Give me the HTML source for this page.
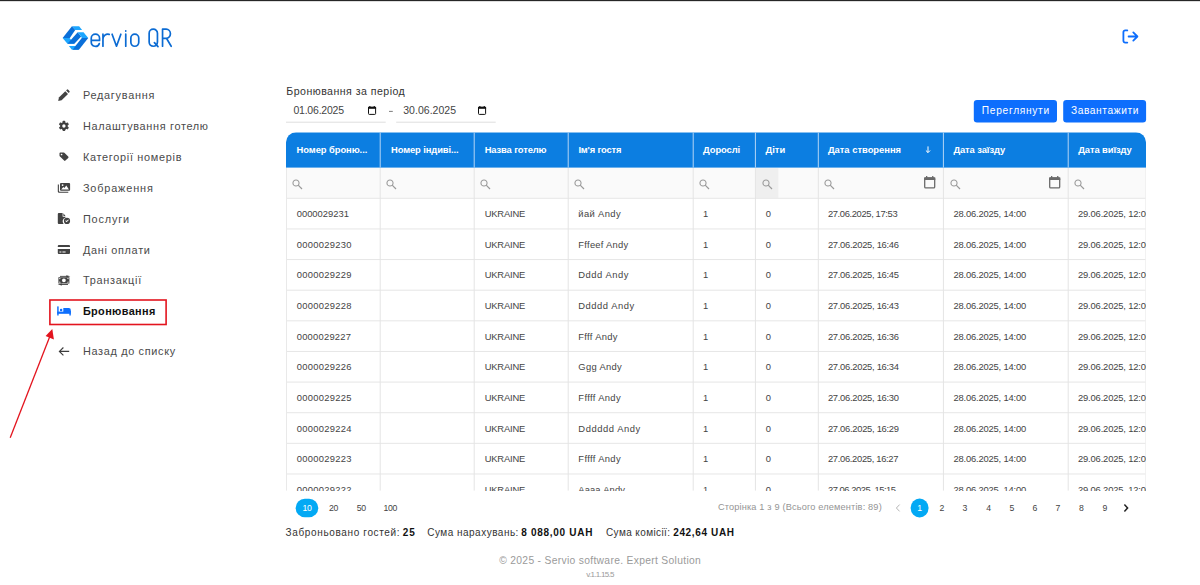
<!DOCTYPE html>
<html lang="uk"><head><meta charset="utf-8"><title>Servio QR</title>
<style>
*{box-sizing:border-box;margin:0;padding:0}
html,body{width:1200px;height:585px;overflow:hidden;background:#fff}
body{font-family:"Liberation Sans",sans-serif;color:#333;position:relative}
.a{position:absolute;white-space:nowrap}
.t{position:absolute;white-space:nowrap;line-height:20px;margin-top:-10px}
#topbar{left:0;top:0;width:1200px;height:1.2px;background:#2a2a2a}
.nav{font-size:10.9px;color:#4a4a4a}
#grid{left:286px;top:132.3px;width:860px;height:358.5px;overflow:hidden;border-radius:10px 10px 0 0}
#ghead{left:0;top:0;width:920px;height:35.3px;background:#0c7ee1}
.hd{font-size:9.4px;font-weight:bold;color:#fff}
.vl{position:absolute;top:0;width:1px;height:360px;background:#e3e3e3}
.vh{position:absolute;top:0;width:1px;height:35.3px;background:#7fb9ee}
.hl{position:absolute;left:0;width:920px;height:1px;background:#e6e6e6}
#gfilt{left:0;top:35.3px;width:920px;height:30.8px;background:#fafafa}
.c{font-size:9.4px;color:#444}
.btn{position:absolute;height:22.5px;border-radius:3.2px;background:#0d6efd}
.bt{font-size:10.2px;color:#fff}
.pg{font-size:8.7px;color:#444}
.sm{font-size:10px;color:#333}
.sb{font-size:10px;color:#111;font-weight:bold}
.ft{color:#9a9a9a}
</style></head><body>

<svg class="a" style="left:0;top:0" width="1200" height="585" viewBox="0 0 1200 585">
<defs><clipPath id="gc"><path d="M286.0 490.8V142.35A10 10 0 0 1 296.0 132.35H1136.0A10 10 0 0 1 1146.0 142.35V490.8Z"/></clipPath></defs>
<g clip-path="url(#gc)">
<rect x="286.0" y="167.6" width="860.0" height="30.700000000000017" fill="#fafafa"/>
<rect x="755.9" y="168.2" width="22.4" height="29.700000000000017" fill="#efefef"/>
<rect x="286.0" y="197.80" width="860.0" height="1" fill="#e6e6e6"/>
<rect x="286.0" y="228.43" width="860.0" height="1" fill="#e6e6e6"/>
<rect x="286.0" y="259.06" width="860.0" height="1" fill="#e6e6e6"/>
<rect x="286.0" y="289.69" width="860.0" height="1" fill="#e6e6e6"/>
<rect x="286.0" y="320.32" width="860.0" height="1" fill="#e6e6e6"/>
<rect x="286.0" y="350.95" width="860.0" height="1" fill="#e6e6e6"/>
<rect x="286.0" y="381.58" width="860.0" height="1" fill="#e6e6e6"/>
<rect x="286.0" y="412.21" width="860.0" height="1" fill="#e6e6e6"/>
<rect x="286.0" y="442.84" width="860.0" height="1" fill="#e6e6e6"/>
<rect x="286.0" y="473.47" width="860.0" height="1" fill="#e6e6e6"/>
<rect x="286.0" y="504.10" width="860.0" height="1" fill="#e6e6e6"/>
<rect x="286.0" y="167.6" width="1" height="323.20000000000005" fill="#e9e9e9"/>
<rect x="1145.2" y="167.6" width=".8" height="323.20000000000005" fill="#efefef"/>
<rect x="379.70" y="167.6" width="1" height="323.20000000000005" fill="#e4e4e4"/>
<rect x="473.70" y="167.6" width="1" height="323.20000000000005" fill="#e4e4e4"/>
<rect x="567.70" y="167.6" width="1" height="323.20000000000005" fill="#e4e4e4"/>
<rect x="692.70" y="167.6" width="1" height="323.20000000000005" fill="#e4e4e4"/>
<rect x="754.90" y="167.6" width="1" height="323.20000000000005" fill="#e4e4e4"/>
<rect x="817.80" y="167.6" width="1" height="323.20000000000005" fill="#e4e4e4"/>
<rect x="942.90" y="167.6" width="1" height="323.20000000000005" fill="#e4e4e4"/>
<rect x="1067.70" y="167.6" width="1" height="323.20000000000005" fill="#e4e4e4"/>
<rect x="286.0" y="132.35" width="860.0" height="35.25" fill="#0c7ee1"/>
<rect x="379.70" y="132.35" width="1" height="35.25" fill="#b4d5f5"/>
<rect x="473.70" y="132.35" width="1" height="35.25" fill="#b4d5f5"/>
<rect x="567.70" y="132.35" width="1" height="35.25" fill="#b4d5f5"/>
<rect x="692.70" y="132.35" width="1" height="35.25" fill="#b4d5f5"/>
<rect x="754.90" y="132.35" width="1" height="35.25" fill="#b4d5f5"/>
<rect x="817.80" y="132.35" width="1" height="35.25" fill="#b4d5f5"/>
<rect x="942.90" y="132.35" width="1" height="35.25" fill="#b4d5f5"/>
<rect x="1067.70" y="132.35" width="1" height="35.25" fill="#b4d5f5"/>
</g>
<rect x="973.8" y="99.9" width="83.2" height="22.5" rx="3.2" fill="#0d6efd"/>
<rect x="1063.2" y="99.9" width="82.9" height="22.5" rx="3.2" fill="#0d6efd"/>
<rect x="286" y="121.7" width="99.7" height="1" fill="#dedede"/>
<rect x="396.2" y="121.7" width="99.5" height="1" fill="#dedede"/>
<rect x="389" y="110.9" width="3.8" height=".85" fill="#666"/>
<rect x="295.6" y="498.8" width="22.7" height="18.4" rx="9.2" fill="#03a9f4"/>
<rect x="910.7" y="498.6" width="17.8" height="18.8" rx="8.9" fill="#03a9f4"/>
<rect x="49.9" y="300" width="116.2" height="24.5" fill="none" stroke="#e3141e" stroke-width="1.6"/>
<path d="M10.2 437.8 L49.6 337" stroke="#e3141e" stroke-width="1.3" fill="none"/><path d="M52.3 329 L53.9 339.4 L45.6 335.9 Z" fill="#e3141e"/>
<rect x="0" y="0" width="1200" height="1.15" fill="#262626"/>
</svg>
<svg class="a" style="left:60px;top:24px" width="30" height="28" viewBox="0 0 627 585">
<polygon points="250,45 400,45 462,125 318,125" fill="#1ca6ff"/>
<polygon points="250,45 318,125 205,290 55,295" fill="#0a6fd9"/>
<polygon points="55,295 200,293 300,415 155,415" fill="#1ca6ff"/>
<polygon points="370,170 442,262 300,415 155,415" fill="#0a6fd9"/>
<polygon points="370,170 492,170 590,290 455,290 442,262" fill="#1ca6ff"/>
<polygon points="185,460 322,460 395,540 250,540" fill="#1ca6ff"/>
<polygon points="455,290 590,290 395,540 268,540 322,460" fill="#0a6fd9"/>
</svg>
<svg class="a" style="left:88px;top:26px" width="90" height="24" viewBox="88 26 90 24" fill="none" stroke="#0b6bd3" stroke-width="1.7" stroke-linecap="round" stroke-linejoin="round">
<path d="M91.25 40.4H99.55V38.3A4.15 4.15 0 0 0 91.25 38.3V42.1A4.15 4.15 0 0 0 99.3 43.6"/>
<path d="M102.95 34.2V46.25M102.95 39A4.8 4.8 0 0 1 109.2 34.4"/>
<path d="M112.1 34.2L116.5 46.2L120.85 34.2"/>
<path d="M125.75 34.2V46.25M125.75 30.9V31.1"/>
<path d="M130.85 38.1A3.95 3.95 0 0 1 138.75 38.1V42.3A3.95 3.95 0 0 1 130.85 42.3Z"/>
<path d="M149.15 33.3A4.15 4.15 0 0 1 157.45 33.3V42.1A4.15 4.15 0 0 1 149.15 42.1Z"/>
<path d="M154.4 42.6L158 46.6"/>
<path d="M162.55 46.25V29.15H166.2A4.2 4.6 0 0 1 166.2 38.4H162.55M166.6 38.5L171.2 46.25"/>
</svg>
<svg class="a" style="left:1121px;top:28px" width="19" height="17" viewBox="1121 28 19 17" fill="none" stroke="#0d6efd" stroke-width="1.8" stroke-linecap="round" stroke-linejoin="round">
<path d="M1127.3 30.4H1125.2A1.8 1.8 0 0 0 1123.4 32.2V40.8A1.8 1.8 0 0 0 1125.2 42.6H1127.3"/>
<path d="M1128.6 36.5H1137M1133.3 32.4L1137.4 36.5L1133.3 40.6"/>
</svg>
<div class="t nav" id="nav0" style="left:82.9px;top:95.2px;letter-spacing:0.742px">Редагування</div>
<div class="t nav" id="nav1" style="left:82.9px;top:126.0px;letter-spacing:0.676px">Налаштування готелю</div>
<div class="t nav" id="nav2" style="left:82.9px;top:157.0px;letter-spacing:0.707px">Категорії номерів</div>
<div class="t nav" id="nav3" style="left:82.9px;top:188.0px;letter-spacing:0.848px">Зображення</div>
<div class="t nav" id="nav4" style="left:82.9px;top:218.8px;letter-spacing:0.852px">Послуги</div>
<div class="t nav" id="nav5" style="left:82.9px;top:249.6px;letter-spacing:0.691px">Дані оплати</div>
<div class="t nav" id="nav6" style="left:82.9px;top:280.3px;letter-spacing:0.736px">Транзакції</div>
<div class="t nav" id="nav7" style="left:82.9px;top:311.2px;letter-spacing:0.373px;font-weight:bold;color:#111">Бронювання</div>
<div class="t nav" id="nav8" style="left:82.9px;top:351.3px;letter-spacing:0.673px">Назад до списку</div>
<svg class="a" style="left:56px;top:88px" width="16" height="270" viewBox="56 88 16 270">
<g fill="#424242">
<!-- pencil -->
<path d="M58.2 100.9L58.9 97.6L65.3 91.2L68 93.9L61.6 100.3Z"/>
<path d="M66.1 90.4L66.8 89.7A1 1 0 0 1 68.2 89.7L69.4 90.9A1 1 0 0 1 69.4 92.3L68.7 93Z"/>
<!-- gear -->
<g transform="translate(63.9 125.95)">
<circle r="2.75" fill="none" stroke="#3d3d3d" stroke-width="2.1"/>
<g id="tth"><rect x="-1.35" y="-5.1" width="2.7" height="2.4" rx=".7"/><rect x="-1.35" y="2.7" width="2.7" height="2.4" rx=".7"/></g>
<use href="#tth" transform="rotate(60)"/><use href="#tth" transform="rotate(120)"/>
</g>
<!-- tag -->
<path transform="translate(63.85 156.5) scale(.84) translate(-63.4 -156.65)" fill-rule="evenodd" d="M58.2 152.9A1.1 1.1 0 0 1 59.3 151.8H63.2A1.2 1.2 0 0 1 64 152.1L68.6 156.7A1.1 1.1 0 0 1 68.6 158.3L65.3 161.5A1.1 1.1 0 0 1 63.7 161.5L58.5 156.4A1.2 1.2 0 0 1 58.2 155.6ZM60.7 153.3A1 1 0 1 0 60.7 155.3A1 1 0 1 0 60.7 153.3Z"/>
<!-- images -->
<path d="M57.8 184.6H58.9V190.9A.8.8 0 0 0 59.7 191.7H68.3V192.8H59.2A1.4 1.4 0 0 1 57.8 191.4Z"/>
<path fill-rule="evenodd" d="M60 183.9A1 1 0 0 1 61 182.9H69.1A1 1 0 0 1 70.1 183.9V189.7A1 1 0 0 1 69.1 190.7H61A1 1 0 0 1 60 189.7ZM61.2 189.5H68.9L66.3 185.6L64.4 188L63.3 186.9ZM62.6 184.2A.9.9 0 1 0 62.6 186A.9.9 0 1 0 62.6 184.2Z"/>
<!-- file check -->
<path d="M58.8 213.1H62.6V216.2A.6.6 0 0 0 63.2 216.8H65.6V217.5A3.9 3.9 0 0 0 63.6 223.9H58.8A1 1 0 0 1 57.8 222.9V214.1A1 1 0 0 1 58.8 213.1ZM63.4 213.2L65.5 215.9H63.4Z"/>
<path fill-rule="evenodd" d="M67 217.8A3.1 3.1 0 1 0 67 224A3.1 3.1 0 1 0 67 217.8ZM65.3 220.9L65.9 220.3L66.6 221L68.2 219.4L68.8 220L66.6 222.2Z"/>
<!-- credit card -->
<path d="M57.8 246.1A1 1 0 0 1 58.8 245.1H69A1 1 0 0 1 70 246.1V246.9H57.8Z"/>
<path fill-rule="evenodd" d="M57.8 248.9H70V253A1 1 0 0 1 69 254H58.8A1 1 0 0 1 57.8 253ZM59.4 251.4V252.4H61.4V251.4ZM62.4 251.4V252.4H65.6V251.4Z"/>
<!-- money transfer -->
<path fill-rule="evenodd" d="M58.4 277.2H69.4V283.6H58.4ZM63.9 278.4A1.9 1.9 0 1 0 63.9 282.2A1.9 1.9 0 1 0 63.9 278.4ZM59.3 278.1V279.3A1.2 1.2 0 0 0 60.5 278.1ZM68.5 278.1H67.3A1.2 1.2 0 0 0 68.5 279.3ZM59.3 282.7H60.5A1.2 1.2 0 0 0 59.3 281.5ZM68.5 282.7V281.5A1.2 1.2 0 0 0 67.3 282.7Z"/>
<path d="M66.3 275.3L70.3 276.3L66.3 277.4ZM62 285.5L57.6 284.5L62 283.4Z"/>
<rect x="60" y="275.9" width="7" height=".9"/><rect x="61" y="284" width="7" height=".9"/>
<!-- arrow left -->
<path d="M69.2 351.4H59.6M63.4 347.5L59.4 351.4L63.4 355.3" fill="none" stroke="#3d3d3d" stroke-width="1.15"/>
</g>
<!-- bed -->
<g fill="#0d6efd">
<rect x="57.2" y="306.4" width="1.45" height="9.1"/>
<rect x="57.2" y="311.6" width="13.6" height="2.2"/>
<rect x="69.35" y="311" width="1.45" height="4.5"/>
<circle cx="61.1" cy="309.9" r="1.25"/>
<path d="M63.3 308H68.8A2 2 0 0 1 70.8 310V312H63.3Z"/>
</g>
</svg>
<div class="t " id="ttl" style="left:286.3px;top:90.6px;letter-spacing:0.462px;font-size:10.6px;color:#333">Бронювання за період</div>
<div class="t " id="d1" style="left:293.4px;top:110.4px;letter-spacing:-0.207px;font-size:10.5px;color:#444">01.06.2025</div>
<div class="t " id="d2" style="left:403.2px;top:110.4px;letter-spacing:0.038px;font-size:10.5px;color:#444">30.06.2025</div>
<svg class="a" style="left:367px;top:105px" width="10" height="11" viewBox="367 105 10 11"><rect x="368.5" y="107.3" width="7.1" height="7.1" rx=".8" fill="none" stroke="#111" stroke-width="1"/><rect x="368" y="106.8" width="8.1" height="2" fill="#111"/><rect x="369.3" y="106" width="1.1" height="1.4" fill="#111"/><rect x="373.7" y="106" width="1.1" height="1.4" fill="#111"/></svg>
<svg class="a" style="left:477px;top:105px" width="10" height="11" viewBox="367 105 10 11"><rect x="368.5" y="107.3" width="7.1" height="7.1" rx=".8" fill="none" stroke="#111" stroke-width="1"/><rect x="368" y="106.8" width="8.1" height="2" fill="#111"/><rect x="369.3" y="106" width="1.1" height="1.4" fill="#111"/><rect x="373.7" y="106" width="1.1" height="1.4" fill="#111"/></svg>
<div class="t bt" id="b1" style="left:981.8px;top:110.8px;letter-spacing:0.704px">Переглянути</div>
<div class="t bt" id="b2" style="left:1070.9px;top:110.8px;letter-spacing:0.600px">Завантажити</div>
<div class="a" style="left:286.0px;top:132px;width:860.0px;height:358.8px;overflow:hidden">
<div class="a" style="left:-286.0px;top:-132px;width:0;height:0">
<div class="t hd" id="h0" style="left:296.5px;top:150.0px;letter-spacing:-0.061px">Номер броню...</div>
<div class="t hd" id="h1" style="left:391.0px;top:150.0px;letter-spacing:-0.102px">Номер індиві...</div>
<div class="t hd" id="h2" style="left:484.7px;top:150.0px;letter-spacing:-0.124px">Назва готелю</div>
<div class="t hd" id="h3" style="left:578.4px;top:150.0px;letter-spacing:-0.168px">Ім'я гостя</div>
<div class="t hd" id="h4" style="left:703.1px;top:150.0px;letter-spacing:-0.087px">Дорослі</div>
<div class="t hd" id="h5" style="left:765.6px;top:150.0px;letter-spacing:-0.014px">Діти</div>
<div class="t hd" id="h6" style="left:827.9px;top:150.0px;letter-spacing:-0.001px">Дата створення</div>
<div class="t hd" id="h7" style="left:953.4px;top:150.0px;letter-spacing:-0.084px">Дата заїзду</div>
<div class="t hd" id="h8" style="left:1078.2px;top:150.0px;letter-spacing:-0.081px">Дата виїзду</div>
<svg class="a" style="left:924.2px;top:145.3px" width="8" height="10" viewBox="0 0 8 10"><path d="M4 1.4V7.5M1.9 5.5L4 7.6L6.1 5.5" stroke="#fff" stroke-width="1" fill="none"/></svg>
<svg class="a" style="left:291.3px;top:177.9px" width="13" height="13" viewBox="-5 -5 13 13"><circle r="3.05" fill="none" stroke="#9a9a9a" stroke-width="1.1"/><path d="M2.2 2.2L6 6" stroke="#9a9a9a" stroke-width="1.2" fill="none"/></svg>
<svg class="a" style="left:385.3px;top:177.9px" width="13" height="13" viewBox="-5 -5 13 13"><circle r="3.05" fill="none" stroke="#9a9a9a" stroke-width="1.1"/><path d="M2.2 2.2L6 6" stroke="#9a9a9a" stroke-width="1.2" fill="none"/></svg>
<svg class="a" style="left:479.3px;top:177.9px" width="13" height="13" viewBox="-5 -5 13 13"><circle r="3.05" fill="none" stroke="#9a9a9a" stroke-width="1.1"/><path d="M2.2 2.2L6 6" stroke="#9a9a9a" stroke-width="1.2" fill="none"/></svg>
<svg class="a" style="left:573.3px;top:177.9px" width="13" height="13" viewBox="-5 -5 13 13"><circle r="3.05" fill="none" stroke="#9a9a9a" stroke-width="1.1"/><path d="M2.2 2.2L6 6" stroke="#9a9a9a" stroke-width="1.2" fill="none"/></svg>
<svg class="a" style="left:698.3px;top:177.9px" width="13" height="13" viewBox="-5 -5 13 13"><circle r="3.05" fill="none" stroke="#9a9a9a" stroke-width="1.1"/><path d="M2.2 2.2L6 6" stroke="#9a9a9a" stroke-width="1.2" fill="none"/></svg>
<svg class="a" style="left:760.5px;top:177.9px" width="13" height="13" viewBox="-5 -5 13 13"><circle r="3.05" fill="none" stroke="#9a9a9a" stroke-width="1.1"/><path d="M2.2 2.2L6 6" stroke="#9a9a9a" stroke-width="1.2" fill="none"/></svg>
<svg class="a" style="left:823.4px;top:177.9px" width="13" height="13" viewBox="-5 -5 13 13"><circle r="3.05" fill="none" stroke="#9a9a9a" stroke-width="1.1"/><path d="M2.2 2.2L6 6" stroke="#9a9a9a" stroke-width="1.2" fill="none"/></svg>
<svg class="a" style="left:948.5px;top:177.9px" width="13" height="13" viewBox="-5 -5 13 13"><circle r="3.05" fill="none" stroke="#9a9a9a" stroke-width="1.1"/><path d="M2.2 2.2L6 6" stroke="#9a9a9a" stroke-width="1.2" fill="none"/></svg>
<svg class="a" style="left:1073.3px;top:177.9px" width="13" height="13" viewBox="-5 -5 13 13"><circle r="3.05" fill="none" stroke="#9a9a9a" stroke-width="1.1"/><path d="M2.2 2.2L6 6" stroke="#9a9a9a" stroke-width="1.2" fill="none"/></svg>
<svg class="a" style="left:924.3px;top:176.1px" width="11.4" height="12.6" viewBox="0 0 11.4 12.6"><rect x=".7" y="2" width="10" height="9.9" rx="1" fill="none" stroke="#6a6a6a" stroke-width="1.3"/><rect x=".1" y="1.4" width="11.2" height="2.6" fill="#6a6a6a"/><rect x="2" y="0" width="1.3" height="2" fill="#6a6a6a"/><rect x="8.1" y="0" width="1.3" height="2" fill="#6a6a6a"/></svg>
<svg class="a" style="left:1049.3px;top:176.1px" width="11.4" height="12.6" viewBox="0 0 11.4 12.6"><rect x=".7" y="2" width="10" height="9.9" rx="1" fill="none" stroke="#6a6a6a" stroke-width="1.3"/><rect x=".1" y="1.4" width="11.2" height="2.6" fill="#6a6a6a"/><rect x="2" y="0" width="1.3" height="2" fill="#6a6a6a"/><rect x="8.1" y="0" width="1.3" height="2" fill="#6a6a6a"/></svg>
<div class="t c" id="c0_0" style="left:296.7px;top:214.1px;letter-spacing:0.007px">0000029231</div>
<div class="t c" id="c0_2" style="left:484.7px;top:214.1px;letter-spacing:-0.181px">UKRAINE</div>
<div class="t c" id="c0_3" style="left:578.3px;top:214.1px;letter-spacing:0.375px">йай Andy</div>
<div class="t c" id="c0_4" style="left:703.1px;top:214.1px;letter-spacing:0.000px">1</div>
<div class="t c" id="c0_5" style="left:765.8px;top:214.1px;letter-spacing:0.000px">0</div>
<div class="t c" id="c0_6" style="left:827.9px;top:214.1px;letter-spacing:-0.368px">27.06.2025, 17:53</div>
<div class="t c" id="c0_7" style="left:953.4px;top:214.1px;letter-spacing:-0.175px">28.06.2025, 14:00</div>
<div class="t c" id="c0_8" style="left:1078.0px;top:214.1px;letter-spacing:-0.162px">29.06.2025, 12:00</div>
<div class="t c" id="c1_0" style="left:296.7px;top:244.7px;letter-spacing:0.295px">0000029230</div>
<div class="t c" id="c1_2" style="left:484.7px;top:244.7px;letter-spacing:-0.181px">UKRAINE</div>
<div class="t c" id="c1_3" style="left:578.3px;top:244.7px;letter-spacing:0.273px">Fffeef Andy</div>
<div class="t c" id="c1_4" style="left:703.1px;top:244.7px;letter-spacing:0.000px">1</div>
<div class="t c" id="c1_5" style="left:765.8px;top:244.7px;letter-spacing:0.000px">0</div>
<div class="t c" id="c1_6" style="left:827.9px;top:244.7px;letter-spacing:-0.281px">27.06.2025, 16:46</div>
<div class="t c" id="c1_7" style="left:953.4px;top:244.7px;letter-spacing:-0.175px">28.06.2025, 14:00</div>
<div class="t c" id="c1_8" style="left:1078.0px;top:244.7px;letter-spacing:-0.162px">29.06.2025, 12:00</div>
<div class="t c" id="c2_0" style="left:296.7px;top:275.4px;letter-spacing:0.295px">0000029229</div>
<div class="t c" id="c2_2" style="left:484.7px;top:275.4px;letter-spacing:-0.181px">UKRAINE</div>
<div class="t c" id="c2_3" style="left:578.3px;top:275.4px;letter-spacing:0.541px">Dddd Andy</div>
<div class="t c" id="c2_4" style="left:703.1px;top:275.4px;letter-spacing:0.000px">1</div>
<div class="t c" id="c2_5" style="left:765.8px;top:275.4px;letter-spacing:0.000px">0</div>
<div class="t c" id="c2_6" style="left:827.9px;top:275.4px;letter-spacing:-0.281px">27.06.2025, 16:45</div>
<div class="t c" id="c2_7" style="left:953.4px;top:275.4px;letter-spacing:-0.175px">28.06.2025, 14:00</div>
<div class="t c" id="c2_8" style="left:1078.0px;top:275.4px;letter-spacing:-0.162px">29.06.2025, 12:00</div>
<div class="t c" id="c3_0" style="left:296.7px;top:306.0px;letter-spacing:0.295px">0000029228</div>
<div class="t c" id="c3_2" style="left:484.7px;top:306.0px;letter-spacing:-0.181px">UKRAINE</div>
<div class="t c" id="c3_3" style="left:578.3px;top:306.0px;letter-spacing:0.534px">Ddddd Andy</div>
<div class="t c" id="c3_4" style="left:703.1px;top:306.0px;letter-spacing:0.000px">1</div>
<div class="t c" id="c3_5" style="left:765.8px;top:306.0px;letter-spacing:0.000px">0</div>
<div class="t c" id="c3_6" style="left:827.9px;top:306.0px;letter-spacing:-0.281px">27.06.2025, 16:43</div>
<div class="t c" id="c3_7" style="left:953.4px;top:306.0px;letter-spacing:-0.175px">28.06.2025, 14:00</div>
<div class="t c" id="c3_8" style="left:1078.0px;top:306.0px;letter-spacing:-0.162px">29.06.2025, 12:00</div>
<div class="t c" id="c4_0" style="left:296.7px;top:336.6px;letter-spacing:0.240px">0000029227</div>
<div class="t c" id="c4_2" style="left:484.7px;top:336.6px;letter-spacing:-0.181px">UKRAINE</div>
<div class="t c" id="c4_3" style="left:578.3px;top:336.6px;letter-spacing:0.316px">Ffff Andy</div>
<div class="t c" id="c4_4" style="left:703.1px;top:336.6px;letter-spacing:0.000px">1</div>
<div class="t c" id="c4_5" style="left:765.8px;top:336.6px;letter-spacing:0.000px">0</div>
<div class="t c" id="c4_6" style="left:827.9px;top:336.6px;letter-spacing:-0.281px">27.06.2025, 16:36</div>
<div class="t c" id="c4_7" style="left:953.4px;top:336.6px;letter-spacing:-0.175px">28.06.2025, 14:00</div>
<div class="t c" id="c4_8" style="left:1078.0px;top:336.6px;letter-spacing:-0.162px">29.06.2025, 12:00</div>
<div class="t c" id="c5_0" style="left:296.7px;top:367.2px;letter-spacing:0.295px">0000029226</div>
<div class="t c" id="c5_2" style="left:484.7px;top:367.2px;letter-spacing:-0.181px">UKRAINE</div>
<div class="t c" id="c5_3" style="left:578.3px;top:367.2px;letter-spacing:0.330px">Ggg Andy</div>
<div class="t c" id="c5_4" style="left:703.1px;top:367.2px;letter-spacing:0.000px">1</div>
<div class="t c" id="c5_5" style="left:765.8px;top:367.2px;letter-spacing:0.000px">0</div>
<div class="t c" id="c5_6" style="left:827.9px;top:367.2px;letter-spacing:-0.281px">27.06.2025, 16:34</div>
<div class="t c" id="c5_7" style="left:953.4px;top:367.2px;letter-spacing:-0.175px">28.06.2025, 14:00</div>
<div class="t c" id="c5_8" style="left:1078.0px;top:367.2px;letter-spacing:-0.162px">29.06.2025, 12:00</div>
<div class="t c" id="c6_0" style="left:296.7px;top:397.9px;letter-spacing:0.295px">0000029225</div>
<div class="t c" id="c6_2" style="left:484.7px;top:397.9px;letter-spacing:-0.181px">UKRAINE</div>
<div class="t c" id="c6_3" style="left:578.3px;top:397.9px;letter-spacing:0.356px">Fffff Andy</div>
<div class="t c" id="c6_4" style="left:703.1px;top:397.9px;letter-spacing:0.000px">1</div>
<div class="t c" id="c6_5" style="left:765.8px;top:397.9px;letter-spacing:0.000px">0</div>
<div class="t c" id="c6_6" style="left:827.9px;top:397.9px;letter-spacing:-0.281px">27.06.2025, 16:30</div>
<div class="t c" id="c6_7" style="left:953.4px;top:397.9px;letter-spacing:-0.175px">28.06.2025, 14:00</div>
<div class="t c" id="c6_8" style="left:1078.0px;top:397.9px;letter-spacing:-0.162px">29.06.2025, 12:00</div>
<div class="t c" id="c7_0" style="left:296.7px;top:428.5px;letter-spacing:0.295px">0000029224</div>
<div class="t c" id="c7_2" style="left:484.7px;top:428.5px;letter-spacing:-0.181px">UKRAINE</div>
<div class="t c" id="c7_3" style="left:578.3px;top:428.5px;letter-spacing:0.570px">Dddddd Andy</div>
<div class="t c" id="c7_4" style="left:703.1px;top:428.5px;letter-spacing:0.000px">1</div>
<div class="t c" id="c7_5" style="left:765.8px;top:428.5px;letter-spacing:0.000px">0</div>
<div class="t c" id="c7_6" style="left:827.9px;top:428.5px;letter-spacing:-0.281px">27.06.2025, 16:29</div>
<div class="t c" id="c7_7" style="left:953.4px;top:428.5px;letter-spacing:-0.175px">28.06.2025, 14:00</div>
<div class="t c" id="c7_8" style="left:1078.0px;top:428.5px;letter-spacing:-0.162px">29.06.2025, 12:00</div>
<div class="t c" id="c8_0" style="left:296.7px;top:459.1px;letter-spacing:0.295px">0000029223</div>
<div class="t c" id="c8_2" style="left:484.7px;top:459.1px;letter-spacing:-0.181px">UKRAINE</div>
<div class="t c" id="c8_3" style="left:578.3px;top:459.1px;letter-spacing:0.356px">Fffff Andy</div>
<div class="t c" id="c8_4" style="left:703.1px;top:459.1px;letter-spacing:0.000px">1</div>
<div class="t c" id="c8_5" style="left:765.8px;top:459.1px;letter-spacing:0.000px">0</div>
<div class="t c" id="c8_6" style="left:827.9px;top:459.1px;letter-spacing:-0.312px">27.06.2025, 16:27</div>
<div class="t c" id="c8_7" style="left:953.4px;top:459.1px;letter-spacing:-0.175px">28.06.2025, 14:00</div>
<div class="t c" id="c8_8" style="left:1078.0px;top:459.1px;letter-spacing:-0.162px">29.06.2025, 12:00</div>
<div class="t c" id="c9_0" style="left:296.7px;top:489.8px;letter-spacing:0.295px">0000029222</div>
<div class="t c" id="c9_2" style="left:484.7px;top:489.8px;letter-spacing:-0.181px">UKRAINE</div>
<div class="t c" id="c9_3" style="left:578.3px;top:489.8px;letter-spacing:0.077px">Аааа Andy</div>
<div class="t c" id="c9_4" style="left:703.1px;top:489.8px;letter-spacing:0.000px">1</div>
<div class="t c" id="c9_5" style="left:765.8px;top:489.8px;letter-spacing:0.000px">0</div>
<div class="t c" id="c9_6" style="left:827.9px;top:489.8px;letter-spacing:-0.468px">27.06.2025, 15:15</div>
<div class="t c" id="c9_7" style="left:953.4px;top:489.8px;letter-spacing:-0.175px">28.06.2025, 14:00</div>
<div class="t c" id="c9_8" style="left:1078.0px;top:489.8px;letter-spacing:-0.162px">29.06.2025, 12:00</div>
</div></div>
<div class="t pg" style="left:287.0px;width:40px;text-align:center;top:508.1px;letter-spacing:-.3px;color:#fff">10</div>
<div class="t pg" style="left:313.5px;width:40px;text-align:center;top:508.1px;letter-spacing:-.3px">20</div>
<div class="t pg" style="left:341.2px;width:40px;text-align:center;top:508.1px;letter-spacing:-.3px">50</div>
<div class="t pg" style="left:370.3px;width:40px;text-align:center;top:508.1px;letter-spacing:-.3px">100</div>
<div class="t pg" id="pinfo" style="left:717.9px;top:507.1px;letter-spacing:0.166px;color:#949494;font-size:9.2px">Сторінка 1 з 9 (Всього елементів: 89)</div>
<div class="t pg" style="left:899.6px;width:40px;text-align:center;top:508.1px;color:#fff">1</div>
<div class="t pg" style="left:921.9px;width:40px;text-align:center;top:508.1px">2</div>
<div class="t pg" style="left:945px;width:40px;text-align:center;top:508.1px">3</div>
<div class="t pg" style="left:968.7px;width:40px;text-align:center;top:508.1px">4</div>
<div class="t pg" style="left:991.9px;width:40px;text-align:center;top:508.1px">5</div>
<div class="t pg" style="left:1014.8px;width:40px;text-align:center;top:508.1px">6</div>
<div class="t pg" style="left:1038px;width:40px;text-align:center;top:508.1px">7</div>
<div class="t pg" style="left:1061.4px;width:40px;text-align:center;top:508.1px">8</div>
<div class="t pg" style="left:1084.8px;width:40px;text-align:center;top:508.1px">9</div>
<svg class="a" style="left:893.5px;top:503.1px" width="8" height="10" viewBox="0 0 8 10"><path d="M5.6 1.6L2.4 5L5.6 8.4" stroke="#b5b5b5" stroke-width="1" fill="none"/></svg>
<svg class="a" style="left:1122.2px;top:503.1px" width="8" height="10" viewBox="0 0 8 10"><path d="M2.4 1.6L5.6 5L2.4 8.4" stroke="#222" stroke-width="1.5" fill="none"/></svg>
<div class="t sm" id="s1a" style="left:285.6px;top:532.9px;letter-spacing:0.644px">Заброньовано гостей:</div>
<div class="t sb" id="s1b" style="left:402.8px;top:532.9px;letter-spacing:0.875px">25</div>
<div class="t sm" id="s2a" style="left:427.2px;top:532.9px;letter-spacing:0.492px">Сума нарахувань:</div>
<div class="t sb" id="s2b" style="left:521.2px;top:532.9px;letter-spacing:0.711px">8 088,00 UAH</div>
<div class="t sm" id="s3a" style="left:606.0px;top:532.9px;letter-spacing:0.396px">Сума комісії:</div>
<div class="t sb" id="s3b" style="left:673.2px;top:532.9px;letter-spacing:0.641px">242,64 UAH</div>
<div class="t ft" id="f1" style="left:499.2px;top:561.4px;letter-spacing:0.314px;font-size:10.3px">© 2025 - Servio software. Expert Solution</div>
<div class="t ft" id="f2" style="left:586.2px;top:574.6px;letter-spacing:-0.705px;font-size:8px">v.1.1.15.5</div>
</body></html>
